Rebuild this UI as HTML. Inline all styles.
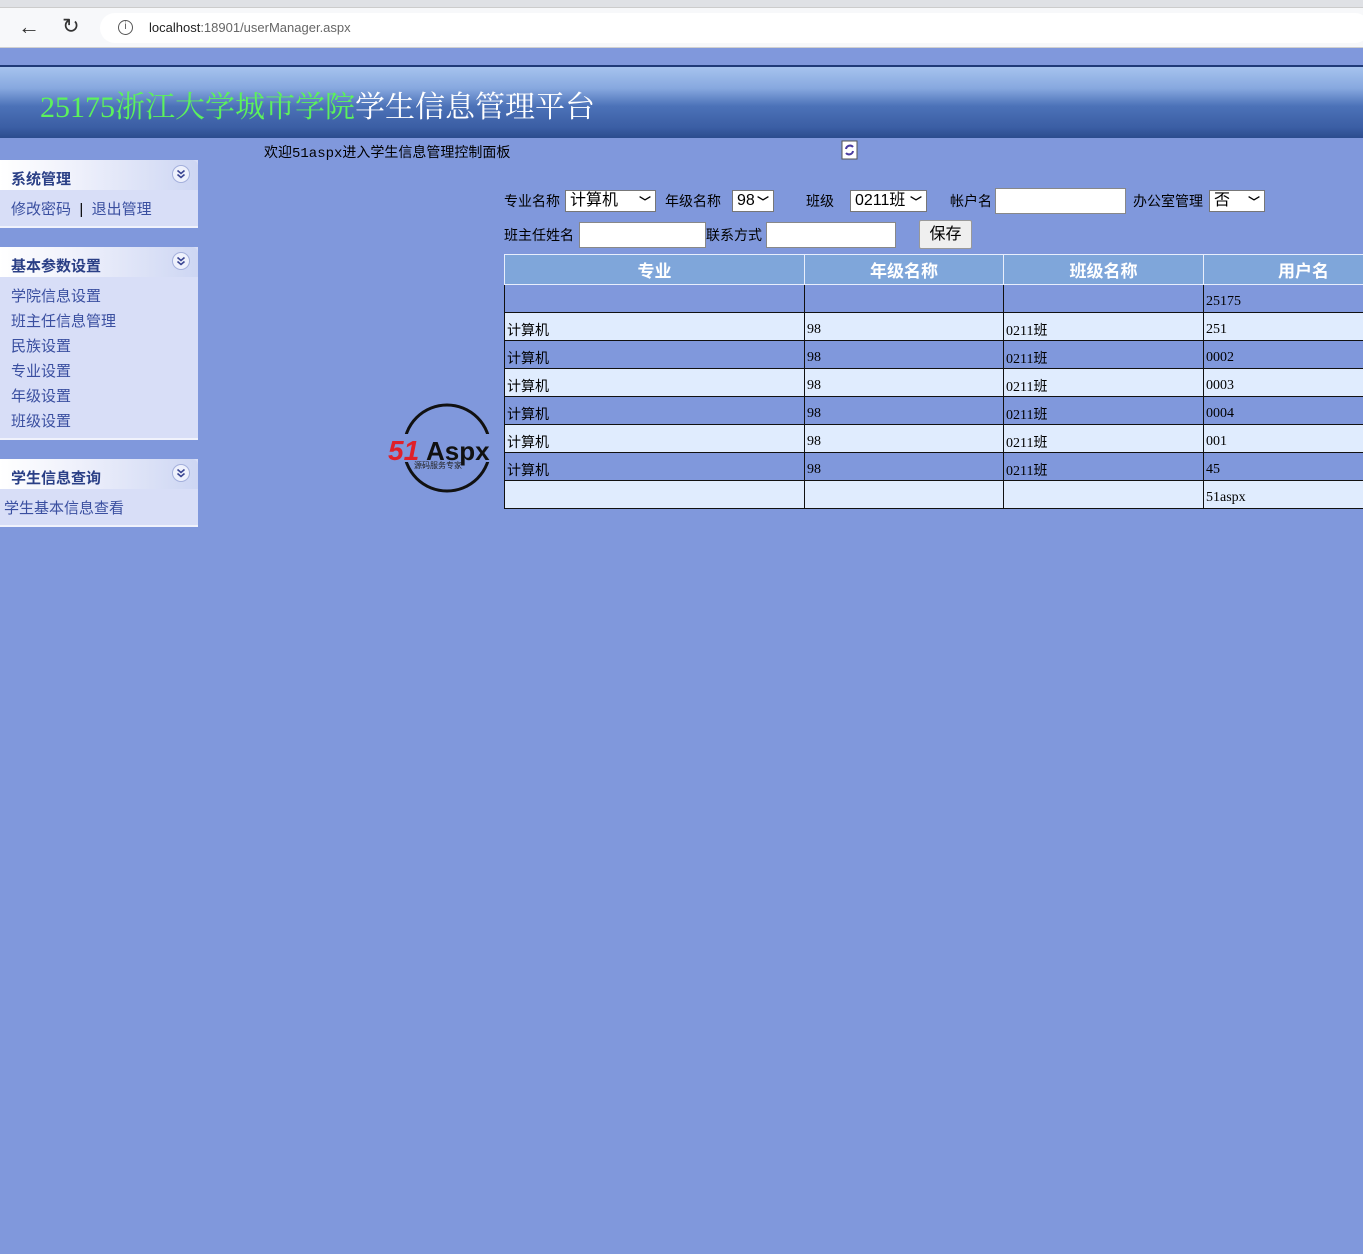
<!DOCTYPE html>
<html><head><meta charset="utf-8"><style>
*{margin:0;padding:0;box-sizing:border-box}
body{width:1363px;height:1254px;background:#8098dc;font-family:"Liberation Sans","Noto Sans CJK SC",sans-serif;font-size:14px;position:relative;overflow:hidden;color:#000}
.abs{position:absolute}
.tabs{left:0;top:0;width:1363px;height:8px;background:#dfe1e5;border-bottom:1px solid #ccc}
.addr{left:0;top:8px;width:1363px;height:40px;background:#f7f8fa;border-bottom:1px solid #d0d0d0}
.url{left:100px;top:13px;width:1270px;height:30px;background:#fff;border-radius:15px}
.hdr{left:0;top:65px;width:1363px;height:73px;border-top:2px solid #1f3a78;background:linear-gradient(#a6c3ee 0%,#87a8df 30%,#4c72b8 55%,#3b5ea4 85%,#2b4c8e 100%)}
.title{left:40px;top:82px;font-family:"Liberation Serif","Noto Serif CJK SC",serif;font-size:30px;color:#5cf25c;white-space:nowrap}
.title span{color:#fff}
.panel{left:0;width:198px;background:#d8def7}
.ph{height:30px;background:linear-gradient(90deg,#fff 0%,#eef0fb 40%,#cdd6f3 100%);border-radius:0 6px 0 0;font-weight:bold;color:#2a3f86;font-size:15px;padding:8px 0 0 11px;position:relative}
.ph svg{position:absolute;right:8px;top:5px}
.pb{color:#3a4fa0;font-size:15px;line-height:25px;padding:7px 0 4px 11px;border-bottom:2px solid #f0f2fc}
input.t{position:absolute;height:26px;border:1px solid #888;background:#fff}
.sel{position:absolute;height:22px;background:#fff;border:1px solid #777;font-size:16px;padding-left:4px;line-height:20px}
.sel b{position:absolute;right:4px;top:1px;font-size:12px}
table{position:absolute;left:504px;top:254px;border-collapse:collapse;width:900px}
td,th{height:28px;font-size:14px;font-family:"Liberation Serif","Noto Sans CJK SC",serif;padding:6px 0 0 2px;text-align:left}
th{background:#7fa6da;color:#fff;font-size:17px;text-align:center;border:1px solid #e8eefc;height:30px;padding:0}
td{border:1px solid #111}
tr.l td{background:#e0ecfe}
</style></head><body>
<div class="abs tabs"></div>
<div class="abs addr"></div>
<div class="abs url"></div>
<div class="abs" style="left:18px;top:14px;font-size:22px;color:#333">←</div>
<div class="abs" style="left:62px;top:14px;font-size:21px;color:#333">↻</div>
<div class="abs" style="left:118px;top:20px;width:15px;height:15px;border:1.5px solid #555;border-radius:50%;font-size:10px;text-align:center;line-height:12px;color:#555">i</div>
<div class="abs" style="left:149px;top:20px;font-size:13px;color:#222">localhost<span style="color:#666">:18901/userManager.aspx</span></div>
<div class="abs hdr"></div>
<div class="abs title">25175浙江大学城市学院<span>学生信息管理平台</span></div>
<div class="abs" style="left:264px;top:142px;font-size:14px;font-family:'Liberation Mono','Noto Sans CJK SC',monospace">欢迎51aspx进入学生信息管理控制面板</div>
<svg class="abs" style="left:841px;top:140px" width="18" height="20"><rect x="1" y="1" width="15" height="18" fill="#fff" stroke="#555"/><path d="M5 9a4 4 0 0 1 7-2M12 11a4 4 0 0 1-7 2" stroke="#4a3ca0" stroke-width="2" fill="none"/></svg>

<svg width="0" height="0" style="position:absolute"><defs><g id="chev"><circle cx="9" cy="9" r="8.5" fill="#eef1fc" stroke="#a4b0dc"/><path d="M5.5 5.5l3.5 3 3.5-3M5.5 9.5l3.5 3 3.5-3" stroke="#3a4592" stroke-width="1.6" fill="none"/></g></defs></svg>
<div class="abs panel" style="top:160px"><div class="ph">系统管理<svg width="18" height="18"><use href="#chev"/></svg></div><div class="pb">修改密码 &nbsp;<span style="color:#000">|</span>&nbsp; 退出管理</div></div>
<div class="abs panel" style="top:247px"><div class="ph">基本参数设置<svg width="18" height="18"><use href="#chev"/></svg></div><div class="pb">学院信息设置<br>班主任信息管理<br>民族设置<br>专业设置<br>年级设置<br>班级设置</div></div>
<div class="abs panel" style="top:459px"><div class="ph">学生信息查询<svg width="18" height="18"><use href="#chev"/></svg></div><div class="pb" style="padding-left:4px">学生基本信息查看</div></div>

<svg class="abs" style="left:386px;top:402px" width="126" height="92"><circle cx="61" cy="46" r="43" fill="none" stroke="#111" stroke-width="3"/><rect x="0" y="32" width="126" height="28" fill="#8098dc"/><text x="2" y="58" font-family="Liberation Sans" font-weight="bold" font-style="italic" font-size="28" fill="#e0202a">51</text><text x="40" y="58" font-family="Liberation Sans" font-weight="bold" font-size="26" fill="#111">Aspx</text><text x="28" y="66" font-size="8" fill="#222" font-family="Noto Sans CJK SC">源码服务专家</text></svg>

<div class="abs" style="left:504px;top:191px">专业名称</div>
<div class="sel" style="left:565px;top:190px;width:91px">计算机<b>﹀</b></div>
<div class="abs" style="left:665px;top:191px">年级名称</div>
<div class="sel" style="left:732px;top:190px;width:42px">98<b>﹀</b></div>
<div class="abs" style="left:806px;top:191px">班级</div>
<div class="sel" style="left:850px;top:190px;width:77px">0211班<b>﹀</b></div>
<div class="abs" style="left:950px;top:191px">帐户名</div>
<input class="t" style="left:995px;top:188px;width:131px">
<div class="abs" style="left:1133px;top:191px">办公室管理</div>
<div class="sel" style="left:1209px;top:190px;width:56px">否<b>﹀</b></div>
<div class="abs" style="left:504px;top:225px">班主任姓名</div>
<input class="t" style="left:579px;top:222px;width:127px">
<div class="abs" style="left:706px;top:225px">联系方式</div>
<input class="t" style="left:766px;top:222px;width:130px">
<div class="abs" style="left:919px;top:220px;width:53px;height:29px;background:#efefef;border:1px solid #999;border-radius:2px;font-size:16px;text-align:center;line-height:27px">保存</div>

<table>
<tr><th style="width:300px">专业</th><th style="width:199px">年级名称</th><th style="width:200px">班级名称</th><th>用户名</th></tr>
<tr><td></td><td></td><td></td><td>25175</td></tr>
<tr class="l"><td>计算机</td><td>98</td><td>0211班</td><td>251</td></tr>
<tr><td>计算机</td><td>98</td><td>0211班</td><td>0002</td></tr>
<tr class="l"><td>计算机</td><td>98</td><td>0211班</td><td>0003</td></tr>
<tr><td>计算机</td><td>98</td><td>0211班</td><td>0004</td></tr>
<tr class="l"><td>计算机</td><td>98</td><td>0211班</td><td>001</td></tr>
<tr><td>计算机</td><td>98</td><td>0211班</td><td>45</td></tr>
<tr class="l"><td></td><td></td><td></td><td>51aspx</td></tr>
</table>
</body></html>
